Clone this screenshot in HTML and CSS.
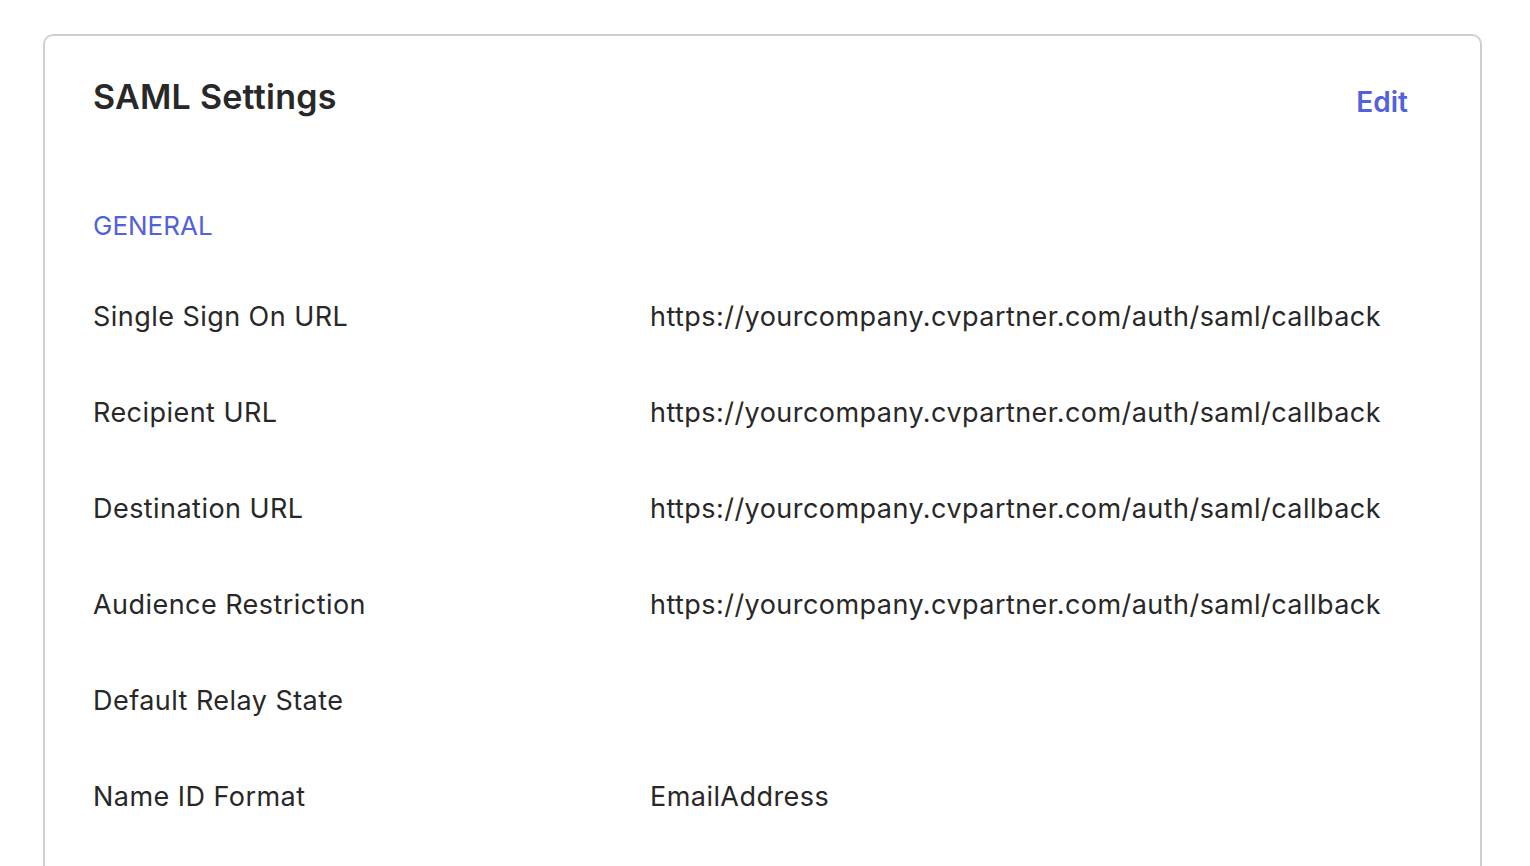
FILE: index.html
```html
<!DOCTYPE html>
<html lang="en">
<head>
    <meta charset="UTF-8">
    <meta name="viewport" content="width=device-width, initial-scale=1.0">
    <title>SAML Settings</title>
    <link rel="stylesheet" href="styles.css">
</head>
<body>
    <div class="page">
        <div class="card">
            <div class="card-header">
                <h1>SAML Settings</h1>
                <a class="edit-link" href="#">Edit</a>
            </div>
            <h2 class="section-title">GENERAL</h2>
            <dl class="settings">
                <div class="row">
                    <dt>Single Sign On URL</dt>
                    <dd>https://yourcompany.cvpartner.com/auth/saml/callback</dd>
                </div>
                <div class="row">
                    <dt>Recipient URL</dt>
                    <dd>https://yourcompany.cvpartner.com/auth/saml/callback</dd>
                </div>
                <div class="row">
                    <dt>Destination URL</dt>
                    <dd>https://yourcompany.cvpartner.com/auth/saml/callback</dd>
                </div>
                <div class="row">
                    <dt>Audience Restriction</dt>
                    <dd>https://yourcompany.cvpartner.com/auth/saml/callback</dd>
                </div>
                <div class="row">
                    <dt>Default Relay State</dt>
                    <dd></dd>
                </div>
                <div class="row">
                    <dt>Name ID Format</dt>
                    <dd>EmailAddress</dd>
                </div>
            </dl>
        </div>
    </div>
</body>
</html>
```

FILE: styles.css
```css
body {
    margin: 0;
    font-family: Inter, "Noto Sans", Arial, sans-serif;
    color: #282828;
    background: #fff;
}
.page {
    padding: 34px 48px 0 43px;
}
.card {
    border: 2px solid #cfcfcf;
    border-bottom: none;
    border-radius: 10px 10px 0 0;
    padding: 41px 72px 40px 48px;
    min-height: 900px;
}
.card-header {
    display: flex;
    justify-content: space-between;
    align-items: flex-start;
}
h1 {
    margin: 0;
    font-size: 34px;
    font-weight: 600;
    line-height: 40px;
    letter-spacing: 0.25px;
}
.edit-link {
    margin-top: 5px;
    color: #5262da;
    font-size: 28px;
    font-weight: 600;
    line-height: 40px;
    text-decoration: none;
}
.section-title {
    margin: 88px 0 0;
    font-size: 26px;
    font-weight: 400;
    line-height: 32px;
    color: #5262da;
}
.settings {
    margin: 27px 0 0;
}
.row {
    display: grid;
    grid-template-columns: 557px 1fr;
    align-items: center;
    height: 96px;
}
dt, dd {
    margin: 0;
    font-size: 27px;
    line-height: 32px;
    letter-spacing: 0.45px;
}
```
